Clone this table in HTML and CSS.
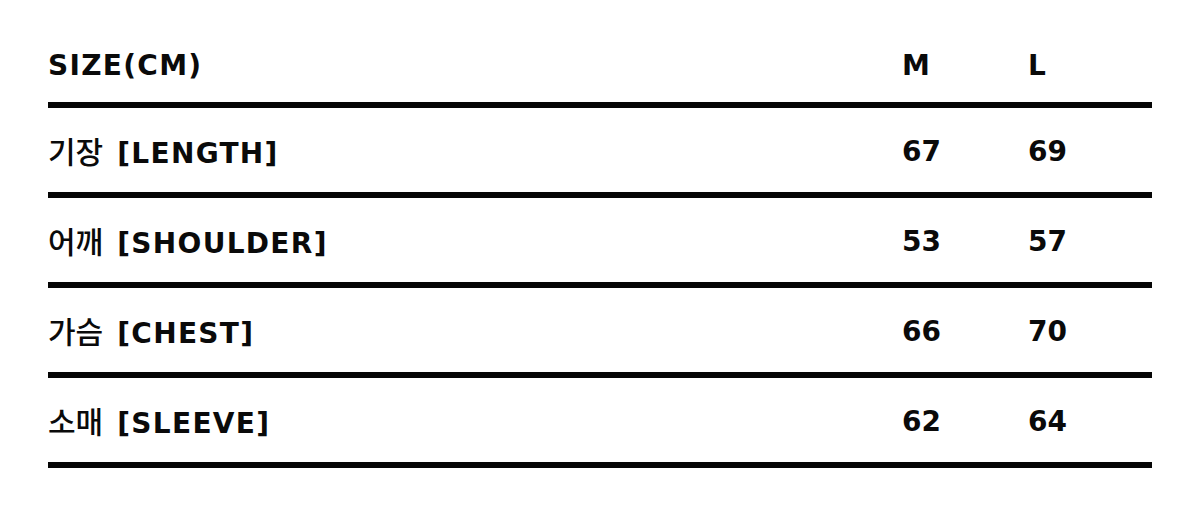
FILE: index.html
```html
<!DOCTYPE html>
<html lang="ko">
<head>
<meta charset="utf-8">
<title>Size chart</title>
<link rel="stylesheet" href="styles.css">
</head>
<body>
<div class="chart">
  <div class="row head">
    <div class="cell label">SIZE(CM)</div>
    <div class="cell num">M</div>
    <div class="cell num">L</div>
  </div>
  <div class="row">
    <div class="cell label"><span class="ko">기장</span> [LENGTH]</div>
    <div class="cell num">67</div>
    <div class="cell num">69</div>
  </div>
  <div class="row">
    <div class="cell label"><span class="ko">어깨</span> [SHOULDER]</div>
    <div class="cell num">53</div>
    <div class="cell num">57</div>
  </div>
  <div class="row">
    <div class="cell label"><span class="ko">가슴</span> [CHEST]</div>
    <div class="cell num">66</div>
    <div class="cell num">70</div>
  </div>
  <div class="row">
    <div class="cell label"><span class="ko">소매</span> [SLEEVE]</div>
    <div class="cell num">62</div>
    <div class="cell num">64</div>
  </div>
</div>
</body>
</html>
```
FILE: styles.css
```css
html, body {
  margin: 0;
  padding: 0;
  background: #ffffff;
}
body {
  font-family: "DejaVu Sans", "Noto Sans CJK KR", sans-serif;
  font-weight: 700;
  font-size: 28px;
  color: #0a0a0a;
}
.chart {
  margin-left: 48px;
  width: 1104px;
}
.row {
  display: grid;
  grid-template-columns: 854px 126px 1fr;
  align-items: center;
  height: 84px;
  border-bottom: 6px solid #050505;
  line-height: 32px;
}
.row.head {
  height: 52px;
  padding-top: 50px;
  align-items: start;
}
.cell {
  padding-top: 3px;
}
.head .cell {
  padding-top: 0;
}
.label {
  letter-spacing: 1.3px;
  word-spacing: 3px;
}
.num {
  letter-spacing: 0;
}
.ko {
  font-family: "Noto Sans CJK KR", sans-serif;
  font-weight: 500;
  font-size: 30px;
  letter-spacing: 0;
}
```
